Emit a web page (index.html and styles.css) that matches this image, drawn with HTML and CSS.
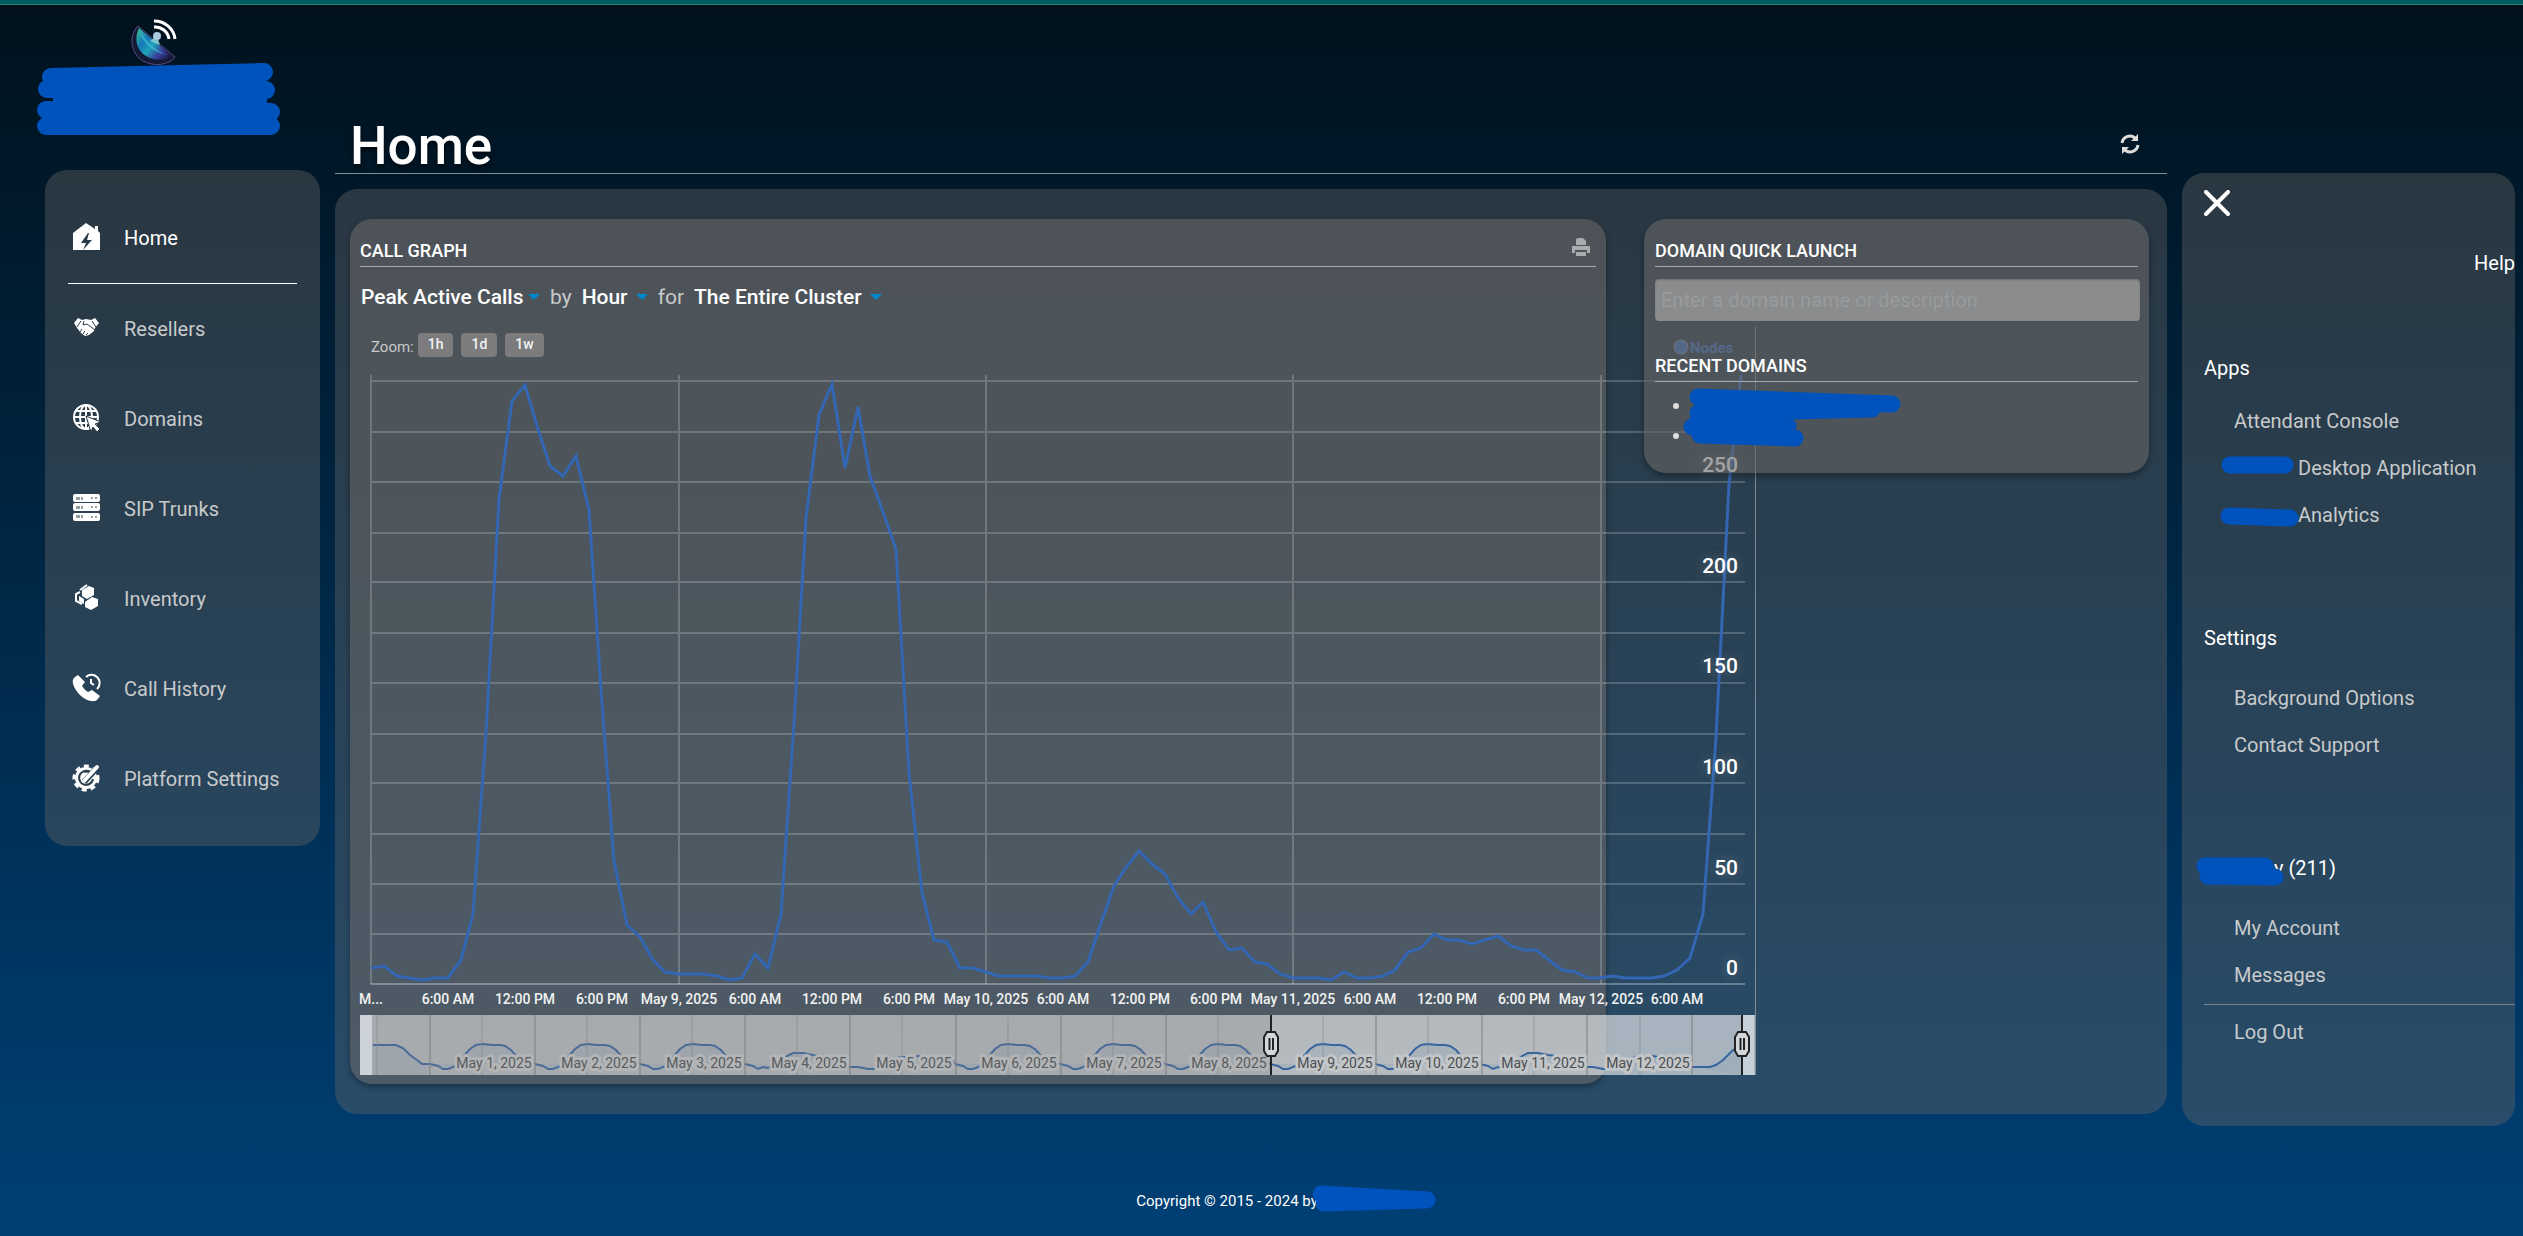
FILE: index.html
```html
<!DOCTYPE html>
<html lang="en">
<head>
<meta charset="utf-8">
<meta name="viewport" content="width=device-width, initial-scale=1">
<title>Home</title>
<link rel="stylesheet" href="styles.css">
</head>
<body>
<div class="topbar"></div>
<div class="layout">
  <aside class="sidebar">
    <a class="logo" href="#" aria-label="Portal home">
      <svg width="275" height="140" viewBox="45 5 275 140" aria-hidden="true">
        <defs>
          <linearGradient id="dish" x1="0" y1="0.2" x2="1" y2="1">
            <stop offset="0" stop-color="#2fae9a"/><stop offset="0.25" stop-color="#1878b8"/>
            <stop offset="0.45" stop-color="#1fa3b8"/><stop offset="0.7" stop-color="#3a3a9a"/><stop offset="1" stop-color="#0b1020"/>
          </linearGradient>
        </defs>
        <path d="M138 26 C128 36 131 54 143 61 C154 67 170 65 175 57 Z" fill="#141a33" stroke="#5a4a86"/>
        <path d="M139 28 C134 38 136 50 146 56 C154 61 166 61 172 56 Z" fill="url(#dish)"/>
        <path d="M140 31 C142 42 152 52 167 55 C156 51 146 42 140 31Z" fill="#3fc0d8" opacity=".7"/>
        <path d="M150 41 L157 36 L160 45Z" fill="#7cc4cf"/>
        <circle cx="157" cy="36" r="4" fill="#a8cbe0"/>
        <path d="M154 27 A14 14 0 0 1 169 39 M154 21 A21 20 0 0 1 175 39" fill="none" stroke="#fff" stroke-width="3"/>
        <g class="marker" stroke-width="18">
          <path d="M51 77 L264 72 M47 89 L266 90 M46 110 L271 112 M46 126 L271 126"/>
          <path d="M62 82 H258 V118 H62Z"/>
        </g>
      </svg>
    </a>
    <nav class="nav panel">
      <a class="nav-item active" href="#">
        <svg class="ico" viewBox="0 0 27 27"><path d="M0 10 L13 0 L22 6 V3 H25 V8 L27 10 V27 H0Z"/><path class="cut" d="M15 10 L8 20 H13 L10 27 L19 17 H14 L16 10Z"/></svg>
        <span>Home</span></a>
      <a class="nav-item" href="#">
        <svg class="ico" viewBox="0 0 27 27"><path d="M1 9 L5 4 L9 6 L13 5 L18 6 L22 4 L26 9 L22 14 L21 17 L16 21 L12 22 L8 19 L4 14Z"/><path class="cutline" d="M4 13 L8 7 M11 7 L10 11 L14 10 L22 16 M23 13 L19 7 M7 18 L9 15 M10 20 L12 17 M13 21 L15 19"/></svg>
        <span>Resellers</span></a>
      <a class="nav-item" href="#">
        <svg class="ico" viewBox="0 0 27 27"><circle cx="13" cy="13" r="12" fill="none" stroke="#fff" stroke-width="2"/><path class="whiteline" d="M13 1 V25 M1 13 H25 M3 7 H23 M3 19 H23"/><ellipse class="whiteline" cx="13" cy="13" rx="6" ry="12"/><path d="M13 12 L28 18 L22 20 L27 25 L24 28 L20 23 L18 28Z" stroke="#293a47" stroke-width="1"/></svg>
        <span>Domains</span></a>
      <a class="nav-item" href="#">
        <svg class="ico" viewBox="0 0 27 27"><rect width="27" height="8" rx="2"/><rect y="9" width="27" height="8" rx="2"/><rect y="19" width="27" height="8" rx="2"/><path class="cutline" d="M4 3v3M6 3v3M9 3v3M4 12v3M6 12v3M9 12v3M4 21v3M6 21v3M9 21v3M18 4h2M22 4h2M18 13h2M22 13h2M18 23h2M22 23h2"/></svg>
        <span>SIP Trunks</span></a>
      <a class="nav-item" href="#">
        <svg class="ico" viewBox="0 0 27 27"><path d="M9 6 L16 2 L21 4 V11 L14 15 L9 12Z"/><path d="M12 18 L19 13 L25 15 V22 L18 26 L12 23Z"/><path class="whiteline" d="M7 6 L14 1 M7 8 L3 10 V17 L9 20"/><path d="M6 12 L11 15 V20 L6 17Z"/></svg>
        <span>Inventory</span></a>
      <a class="nav-item" href="#">
        <svg class="ico" viewBox="0 0 27 27"><path d="M5 1 L12 8 L9 12 C11 15 13 17 15 18 L19 16 L27 22 L24 26 C20 29 12 26 7 21 C1 15 -3 6 2 3Z"/><path class="whiteline" d="M13 3 A8 8 0 1 1 24 15 M18 5 V9 L21 11"/></svg>
        <span>Call History</span></a>
      <a class="nav-item" href="#">
        <svg class="ico" viewBox="0 0 27 27"><circle cx="13" cy="14" r="11"/><circle cx="13" cy="14" r="12" fill="none" stroke="#fff" stroke-width="3" stroke-dasharray="5 4"/><path class="cutline wide" d="M19 10 A7 7 0 1 0 20 15 M17 8 A8 8 0 0 0 11 8"/><path d="M11 18 L24 4" stroke="#29445a" stroke-width="6"/><path d="M11 17 L24 3" stroke="#fff" stroke-width="4" stroke-linecap="round"/></svg>
        <span>Platform Settings</span></a>
    </nav>
  </aside>

  <main class="content">
    <header class="page-head">
      <h1>Home</h1>
      <button class="icon-btn refresh" type="button" aria-label="Refresh">
        <svg width="20" height="22" viewBox="0 0 20 22"><path d="M2 10 A8 8 0 0 1 15 5 M18 12 A8 8 0 0 1 5 17" fill="none" stroke="#ddd" stroke-width="3"/><path d="M18 1 V8 H11Z M2 21 V14 H9Z" fill="#ddd"/></svg>
      </button>
    </header>
    <div class="dash panel">
      <section class="card graph-card">
        <div class="card-title"><h2>CALL GRAPH</h2>
          <button class="icon-btn" type="button" aria-label="Print">
            <svg width="20" height="20" viewBox="0 0 20 20" fill="#a9abac"><path d="M5 8 V2 L7 1 H12 L15 4 V8Z"/><path d="M1 9 H19 V16 H16 V13 H4 V16 H1Z"/><path d="M5 15 H15 V19 H5Z"/></svg>
          </button>
        </div>
        <div class="filters">
          <label class="pick"><select aria-label="Statistic"><option>Peak Active Calls</option></select></label>
          <span>by</span>
          <label class="pick far"><select aria-label="Interval"><option>Hour</option></select></label>
          <span>for</span>
          <label class="pick far"><select aria-label="Scope"><option>The Entire Cluster</option></select></label>
        </div>
        <div class="zoom"><span>Zoom:</span>
          <button type="button">1h</button><button type="button">1d</button><button type="button">1w</button>
        </div>
        <svg class="chart" width="1396" height="705" viewBox="360 370 1396 705">
          <path class="edge" d="M1755.5 327 V1075"/>
          <path class="grid" d="M371 381H1745M371 432H1745M371 482H1745M371 533H1745M371 582H1745M371 633H1745M371 683H1745M371 734H1745M371 783H1745M371 834H1745M371 884H1745M371 934H1745M371 375V984M679 375V984M986 375V984M1293 375V984M1601 375V984"/>
          <path class="grid base" d="M371 984H1745"/>
          <polyline class="series" points="371,968 384,966 397,976 409,978 422,980 435,978 448,978 461,960 473,914 486,733 499,499 512,401 525,385 537,426 550,466 563,476 576,456 589,510 601,690 614,861 627,925 640,937 653,960 665,972 678,974 691,974 704,974 717,976 730,980 742,978 755,954 768,968 781,914 794,723 806,518 819,415 832,384 845,468 858,407 870,476 883,512 896,549 909,773 922,893 934,940 947,942 960,968 973,968 986,972 998,976 1011,976 1024,976 1037,976 1050,978 1062,978 1075,976 1088,962 1101,923 1114,886 1127,866 1139,851 1152,864 1165,874 1178,898 1191,914 1203,902 1216,932 1229,950 1242,948 1255,962 1267,964 1280,974 1293,978 1306,978 1319,978 1331,980 1344,972 1357,978 1370,978 1383,976 1395,970 1408,952 1421,948 1434,934 1447,940 1459,940 1472,944 1485,940 1498,936 1511,946 1524,950 1536,950 1549,960 1562,970 1575,972 1588,978 1600,978 1613,976 1626,978 1639,978 1652,978 1664,976 1677,970 1690,958 1703,914 1716,738 1729,484 1741,375"/>
          <g class="ylab">
            <text x="1738" y="472">250</text><text x="1738" y="573">200</text><text x="1738" y="673">150</text>
            <text x="1738" y="774">100</text><text x="1738" y="875">50</text><text x="1738" y="975">0</text>
          </g>
          <g class="legend"><circle cx="1681" cy="347" r="7"/><text x="1690" y="353">Nodes</text></g>
          <g class="xlab">
            <text x="371" y="1004">M...</text><text x="448" y="1004">6:00 AM</text><text x="525" y="1004">12:00 PM</text><text x="602" y="1004">6:00 PM</text>
            <text x="679" y="1004">May 9, 2025</text><text x="755" y="1004">6:00 AM</text><text x="832" y="1004">12:00 PM</text><text x="909" y="1004">6:00 PM</text>
            <text x="986" y="1004">May 10, 2025</text><text x="1063" y="1004">6:00 AM</text><text x="1140" y="1004">12:00 PM</text><text x="1216" y="1004">6:00 PM</text>
            <text x="1293" y="1004">May 11, 2025</text><text x="1370" y="1004">6:00 AM</text><text x="1447" y="1004">12:00 PM</text><text x="1524" y="1004">6:00 PM</text>
            <text x="1601" y="1004">May 12, 2025</text><text x="1677" y="1004">6:00 AM</text>
          </g>
          <defs>
            <path id="busy" d="M-64 1064L-56 1066L-51 1069L-46 1069L-38 1066L-31 1057L-24 1049L-18 1045L-11 1044L-2 1045L6 1045L11 1046L17 1050L23 1057L31 1061L41 1064"/>
            <path id="quiet" d="M-64 1064L-56 1066L-51 1069L-46 1067L-42 1068L-30 1065L-22 1056L-16 1053L-6 1053L4 1055L14 1056L28 1064L41 1067"/>
            <path id="calm" d="M-64 1067L-56 1067L-46 1069L-36 1069L-30 1064L-18 1058L-10 1057L-4 1058L4 1056L14 1058L28 1067L36 1067L39 1061L41 1064"/>
          </defs>
          <rect class="strip" x="360" y="1015" width="1395" height="60"/>
          <g class="overview">
            <path d="M373 1075V1045L396 1045L403 1048L410 1055L417 1060L422 1064L430 1065V1075Z" stroke="none"/>
            <path class="noarea" d="M373 1045L396 1045L403 1048L410 1055L417 1060L422 1064L430 1064"/>
            <use href="#busy" x="494"/><use href="#busy" x="599"/><use href="#busy" x="704"/><use href="#quiet" x="809"/><use href="#calm" x="914"/>
            <use href="#busy" x="1019"/><use href="#busy" x="1124"/><use href="#busy" x="1229"/><use href="#busy" x="1334"/><use href="#busy" x="1439"/>
            <use href="#quiet" x="1544"/><use href="#calm" x="1649"/>
            <path d="M1690 1067H1710L1716 1065L1723 1060L1733 1050L1741 1046V1075" stroke="none"/>
            <path class="noarea" d="M1690 1067H1710L1716 1065L1723 1060L1733 1050L1741 1046"/>
          </g>
          <path class="tick" d="M377 1015v60M482 1015v60M587 1015v60M692 1015v60M797 1015v60M902 1015v60M1008 1015v60M1113 1015v60M1218 1015v60M1323 1015v60M1428 1015v60M1534 1015v60M1640 1015v60"/>
          <path class="tick strong" d="M430 1015v60M535 1015v60M640 1015v60M745 1015v60M850 1015v60M956 1015v60M1061 1015v60M1166 1015v60M1376 1015v60M1482 1015v60M1587 1015v60M1692 1015v60"/>
          <g class="daylab">
            <text x="494" y="1068">May 1, 2025</text><text x="599" y="1068">May 2, 2025</text><text x="704" y="1068">May 3, 2025</text><text x="809" y="1068">May 4, 2025</text>
            <text x="914" y="1068">May 5, 2025</text><text x="1019" y="1068">May 6, 2025</text><text x="1124" y="1068">May 7, 2025</text><text x="1229" y="1068">May 8, 2025</text>
            <text x="1335" y="1068">May 9, 2025</text><text x="1437" y="1068">May 10, 2025</text><text x="1543" y="1068">May 11, 2025</text><text x="1648" y="1068">May 12, 2025</text>
          </g>
          <path class="shade" d="M372 1015H1271V1075H372Z"/>
          <path class="cap" d="M360 1015H372V1075H360Z M1743 1015H1754V1075H1743Z"/>
          <g class="grip">
            <path d="M1271 1015V1075M1742 1015V1075"/>
            <path class="knob" d="M1267 1032H1275L1278 1037V1051L1275 1056H1267L1264 1051V1037Z M1738 1032H1746L1749 1037V1051L1746 1056H1738L1735 1051V1037Z"/>
            <path d="M1269.500 1038V1050M1273 1038V1050M1740.500 1038V1050M1744 1038V1050"/>
          </g>
        </svg>
      </section>
      <section class="card launch-card">
        <div class="card-title"><h2>DOMAIN QUICK LAUNCH</h2></div>
        <input class="search" type="text" aria-label="Domain" placeholder="Enter a domain name or description">
        <div class="card-title second"><h2>RECENT DOMAINS</h2></div>
        <ul class="recent"><li></li><li></li></ul>
        <svg class="mask recent-mask" width="220" height="72" viewBox="1683 452 220 72" aria-hidden="true"><g class="marker" stroke-width="17"><path d="M1698 461 L1892 468 M1698 477 L1872 473 M1692 491 L1788 490 M1700 499 L1795 502 M1698 484 H1785"/></g></svg>
      </section>
    </div>
  </main>

  <aside class="side panel">
    <button class="icon-btn close" type="button" aria-label="Close menu"><svg width="26" height="26" viewBox="0 0 26 26"><path d="M2 2 L24 24 M24 2 L2 24" stroke="#fff" stroke-width="4" stroke-linecap="round"/></svg></button>
    <a class="help" href="#">Help</a>
    <section class="group apps"><h3>Apps</h3>
      <a href="#">Attendant Console</a>
      <a href="#"><span class="gone"><svg class="mask" width="76" height="22" viewBox="0 0 76 22" aria-hidden="true"><g class="marker" stroke-width="17"><path d="M10 7 H65"/></g></svg></span>Desktop Application</a>
      <a href="#"><span class="gone"><svg class="mask" width="82" height="24" viewBox="1 -2 82 24" aria-hidden="true"><g class="marker" stroke-width="17"><path d="M10 9 L71 11"/></g></svg></span>Analytics</a>
    </section>
    <section class="group"><h3>Settings</h3>
      <a href="#">Background Options</a>
      <a href="#">Contact Support</a>
    </section>
    <section class="group"><h3><span class="gone name"><svg class="mask" width="92" height="34" viewBox="0 0 92 34" aria-hidden="true"><g class="marker" stroke-width="17"><path d="M9 10 H69 M12 20 L79 21"/></g></svg></span>y (211)</h3>
      <a href="#">My Account</a>
      <a href="#">Messages</a>
      <hr>
      <a href="#">Log Out</a>
    </section>
  </aside>
</div>
<footer class="foot"><p>Copyright © 2015 - 2024 by<span class="gone owner"><svg class="mask" width="124" height="28" viewBox="0 0 124 28" aria-hidden="true"><g class="marker" stroke-width="17"><path d="M7 8 L113 14 M10 17 L111 14"/></g></svg></span></p></footer>
</body>
</html>
```
FILE: styles.css
```css
* { box-sizing: border-box; }

body {
  margin: 0;
  min-height: 100vh;
  font: 400 20px/24px Roboto, "Liberation Sans", sans-serif;
  color: #c8cacb;
  background: linear-gradient(#00111c, #004075) fixed;
  overflow-x: hidden;
}

a { color: inherit; text-decoration: none; }
h1, h2, h3, p, ul { margin: 0; padding: 0; }
button, select, input { font: inherit; color: inherit; border: 0; margin: 0; }

.topbar { height: 5px; background: #005e60; border-bottom: 1px solid #2b8285; }

.layout {
  display: grid;
  grid-template-columns: 275px 1fr 333px;
  gap: 15px;
  align-items: start;
  padding: 0 8px 0 45px;
}

.panel { background: rgba(102, 102, 102, 0.4); border-radius: 22px; }

/* logo and main navigation */
.logo { display: block; height: 165px; }
.logo svg { display: block; overflow: visible; }
.marker { fill: #0052bd; stroke: #0052bd; stroke-linecap: round; stroke-linejoin: round; }

.nav { padding: 23px 23px 22px; }
.nav-item { display: flex; align-items: center; gap: 24px; height: 90px; padding-left: 5px; }
.nav-item.active { height: 91px; color: #fff; border-bottom: 1px solid #fff; }
.ico { width: 27px; height: 27px; margin-bottom: 4px; fill: #fff; flex: none; overflow: visible; }
.ico .cut { fill: #293a45; }
.ico .cutline { fill: none; stroke: #293d4b; stroke-width: 1; }
.ico .wide { stroke-width: 2; }
.ico .whiteline { fill: none; stroke: #fff; stroke-width: 2; }

/* page heading */
.page-head {
  display: flex;
  justify-content: space-between;
  align-items: flex-end;
  height: 169px;
  padding: 0 27px 0 15px;
  border-bottom: 1px solid #7f8c94;
}
h1 { font-size: 53px; line-height: 54px; font-weight: 500; color: #fff; text-shadow: 0 3px 5px rgba(0, 0, 0, 0.7); }
.icon-btn { display: block; padding: 0; background: none; line-height: 0; cursor: pointer; }
.icon-btn svg { display: block; }
.refresh { margin-bottom: 18px; }

/* dashboard */
.dash {
  display: grid;
  grid-template-columns: 1fr 505px;
  gap: 38px;
  align-items: start;
  margin-top: 15px;
  padding: 30px 18px 30px 15px;
}
.card {
  min-width: 0;
  position: relative;
  background: rgba(102, 102, 102, 0.6);
  border-radius: 22px;
  padding: 0 10px;
  box-shadow: 0 3px 6px rgba(0, 0, 0, 0.35);
}
.graph-card { padding-bottom: 9px; }
.card-title {
  display: flex;
  justify-content: space-between;
  align-items: center;
  height: 48px;
  padding-top: 17px;
  border-bottom: 1px solid #a5a9ab;
}
h2 { font-size: 18px; line-height: 24px; font-weight: 500; color: #fff; }
.card-title .icon-btn { margin: 0 5px 8px 0; }

.filters { display: flex; align-items: center; gap: 10px; height: 24px; margin-top: 18px; padding-left: 1px; font-size: 21px; }
.filters select {
  appearance: none;
  padding: 0;
  background: transparent;
  color: #fff;
  font-weight: 500;
}
.pick { display: flex; align-items: center; gap: 4px; }
.pick.far { gap: 8px; }
.pick::after { content: ""; border: 6px solid transparent; border-top-color: #0088cc; border-bottom: 0; }

.zoom { display: flex; align-items: center; gap: 8px; height: 24px; margin-top: 24px; padding-left: 11px; }
.zoom span { font-size: 15px; margin: 4px -4px 0 0; }
.zoom button {
  height: 24px;
  padding: 0 10px 2px;
  border-radius: 4px;
  background: #7c7c7e;
  color: #f2f2f2;
  font-size: 14px;
  line-height: 20px;
  font-weight: 500;
}

/* chart: wider than its card, runs on beneath the launch card */
.chart { display: block; margin-top: 13px; overflow: visible; font-weight: 500; }
.edge { stroke: #a4abb0; stroke-width: 1; opacity: 0.7; }
.grid { fill: none; stroke: #fff; stroke-width: 2; opacity: 0.2; }
.grid.base { opacity: 0.3; }
.series { fill: none; stroke: #3366b3; stroke-width: 3; }
.ylab { font-size: 21px; fill: #fff; text-anchor: end; text-shadow: 0 0 12px rgba(160, 160, 160, 0.5); }
.legend { font-size: 15px; font-weight: 700; fill: #3b6fc0; }
.legend circle { stroke: #8a8a8a; stroke-width: 1; }
.xlab, .daylab { font-size: 14px; fill: #f2f2f2; text-anchor: middle; }
.daylab { font-weight: 400; fill: #4c4f52; stroke: #c3c6c9; stroke-width: 6; stroke-linejoin: round; paint-order: stroke; }
.strip { fill: rgba(240, 240, 240, 0.64); }
.overview { fill: rgba(130, 155, 180, 0.25); stroke: #38659f; stroke-width: 2; }
.overview .noarea { fill: none; }
.tick { stroke: #85898c; stroke-width: 1; opacity: 0.6; }
.tick.strong { stroke-width: 2; }
.shade { fill: rgba(128, 128, 128, 0.25); }
.cap { fill: #e4ebf1; opacity: 0.5; }
.grip { fill: none; stroke: #222; stroke-width: 2; }
.grip .knob { fill: #d3d6d9; }

/* quick launch */
.search {
  display: block;
  width: 100%;
  height: 42px;
  margin-top: 12px;
  padding: 0 6px;
  border-radius: 4px;
  background: #8a8c8d;
  box-shadow: inset 0 1px 2px rgba(0, 0, 0, 0.2);
}
.search::placeholder { color: #999b9c; opacity: 1; }
.launch-card { padding: 0 9px 22px 11px; }
.launch-card .card-title { margin-right: 2px; }
.card-title.second { margin-top: 13px; }
.recent { padding: 8px 0 1px 36px; color: #ddd; font-size: 18px; }
.recent li { height: 30px; line-height: 30px; }
.mask { position: absolute; overflow: visible; }
.recent-mask { left: 39px; top: 169px; }

/* account and apps menu */
.side { margin-top: 168px; padding: 17px 0 70px 22px; }
.help { display: block; margin-top: 35px; color: #fff; text-align: right; }
.group { margin-top: 87px; }
.group.apps { margin-top: 81px; }
h3 { font-size: 20px; line-height: 24px; font-weight: 400; color: #fff; margin-bottom: 25px; }
.apps h3 { margin-bottom: 18px; }
.group a { display: block; height: 47px; line-height: 47px; padding-left: 30px; }
.group hr { height: 1px; margin: 5px 0 4px; border: 0; background: #77848f; }
.gone { display: inline-block; position: relative; width: 64px; height: 20px; vertical-align: middle; }
.gone .mask { left: -14px; top: -2px; }
.gone.name { width: 70px; }
.gone.name .mask { left: -8px; top: -4px; }
.gone.owner { width: 50px; }
.gone.owner .mask { left: -4px; top: -6px; }

.foot { padding: 63px 19px 0 0; font-size: 15px; color: #fff; text-align: center; }
```
